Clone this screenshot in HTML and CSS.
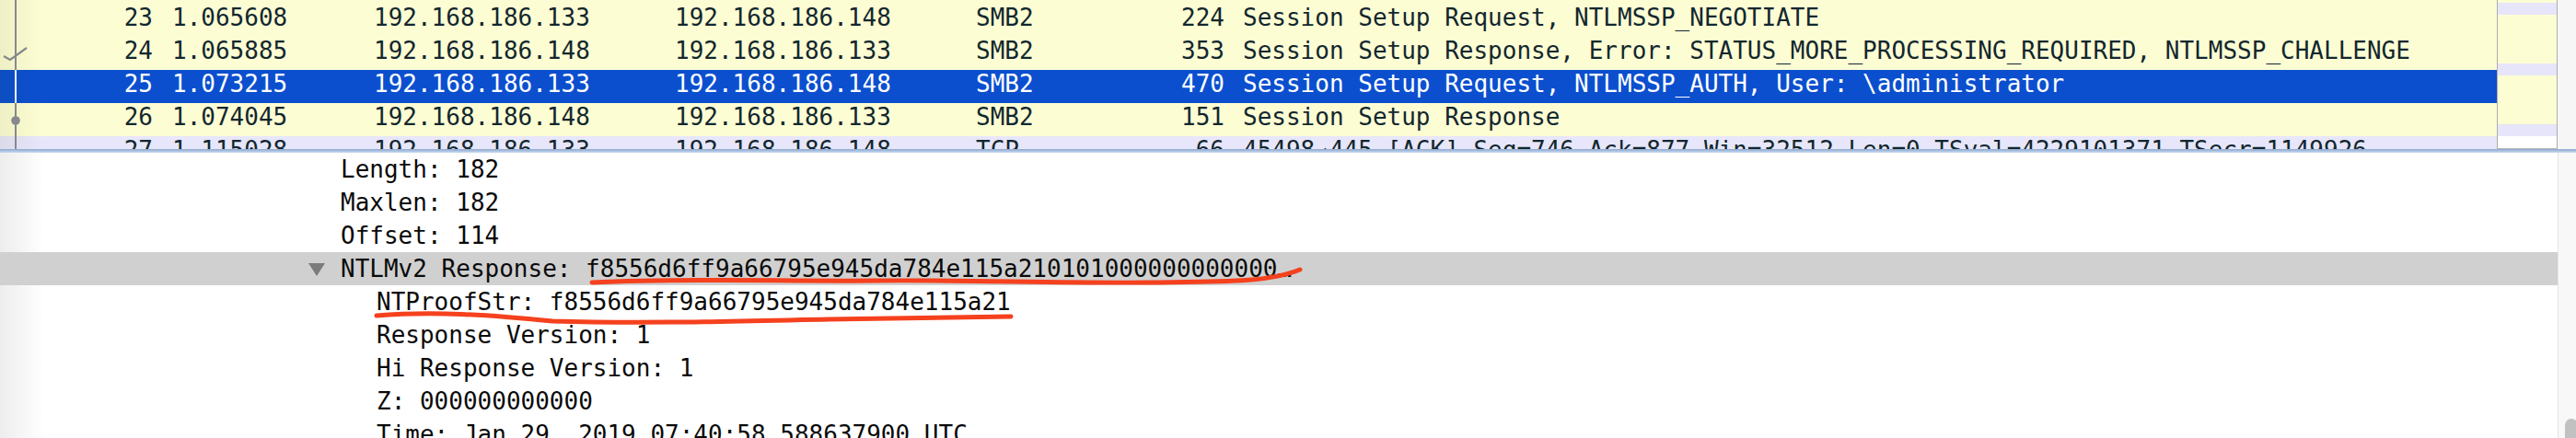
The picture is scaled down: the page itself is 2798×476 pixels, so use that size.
FILE: index.html
```html
<!DOCTYPE html>
<html>
<head>
<meta charset="utf-8">
<link rel="stylesheet" href="styles.css">
</head>
<body>
<div class="app">
  <div class="top">
    <div class="plist">
      <div class="prow-partial smb"><span class="gut"></span></div>
      <div class="prow smb">
        <span class="gut"></span>
        <span class="c-no">23</span><span class="c-time">1.065608</span><span class="c-src">192.168.186.133</span><span class="c-dst">192.168.186.148</span><span class="c-proto">SMB2</span><span class="c-len">224</span><span class="c-info">Session Setup Request, NTLMSSP_NEGOTIATE</span>
      </div>
      <div class="prow smb">
        <span class="gut"><svg class="mark" width="36" height="36" viewBox="0 0 36 36"><polyline points="4,21 11,25 29,12" fill="none" stroke="#8a8d92" stroke-width="2.2"/></svg></span>
        <span class="c-no">24</span><span class="c-time">1.065885</span><span class="c-src">192.168.186.148</span><span class="c-dst">192.168.186.133</span><span class="c-proto">SMB2</span><span class="c-len">353</span><span class="c-info">Session Setup Response, Error: STATUS_MORE_PROCESSING_REQUIRED, NTLMSSP_CHALLENGE</span>
      </div>
      <div class="prow sel">
        <span class="gut"></span>
        <span class="c-no">25</span><span class="c-time">1.073215</span><span class="c-src">192.168.186.133</span><span class="c-dst">192.168.186.148</span><span class="c-proto">SMB2</span><span class="c-len">470</span><span class="c-info">Session Setup Request, NTLMSSP_AUTH, User: \administrator</span>
      </div>
      <div class="prow smb">
        <span class="gut"><svg class="mark" width="36" height="36" viewBox="0 0 36 36"><circle cx="17" cy="19" r="4.8" fill="#8a8d92"/></svg></span>
        <span class="c-no">26</span><span class="c-time">1.074045</span><span class="c-src">192.168.186.148</span><span class="c-dst">192.168.186.133</span><span class="c-proto">SMB2</span><span class="c-len">151</span><span class="c-info">Session Setup Response</span>
      </div>
      <div class="prow tcp">
        <span class="gut"></span>
        <span class="c-no">27</span><span class="c-time">1.115028</span><span class="c-src">192.168.186.133</span><span class="c-dst">192.168.186.148</span><span class="c-proto">TCP</span><span class="c-len">66</span><span class="c-info">45498→445 [ACK] Seq=746 Ack=877 Win=32512 Len=0 TSval=4229101371 TSecr=1149926</span>
      </div>
    </div>
    <div class="minimap">
      <div class="mm mm-top"></div>
      <div class="mm mm-tcp"></div>
      <div class="mm mm-smb"></div>
      <div class="mm mm-tcp"></div>
      <div class="mm mm-smb"></div>
      <div class="mm mm-tcp"></div>
      <div class="mm mm-end"></div>
    </div>
    <div class="vtrack"></div>
  </div>
  <div class="sep"></div>
  <div class="bottom">
    <div class="tree">
      <div class="drow">Length: 182</div>
      <div class="drow">Maxlen: 182</div>
      <div class="drow">Offset: 114</div>
      <div class="drow open"><svg class="twisty" width="18" height="14" viewBox="0 0 18 14"><polygon points="0,0 18,0 9,14" fill="#7b7b7b"/></svg>NTLMv2 Response: f8556d6ff9a66795e945da784e115a210101000000000000…</div>
      <div class="drow child">NTProofStr: f8556d6ff9a66795e945da784e115a21</div>
      <div class="drow child">Response Version: 1</div>
      <div class="drow child">Hi Response Version: 1</div>
      <div class="drow child">Z: 000000000000</div>
      <div class="drow child">Time: Jan 29, 2019 07:40:58.588637900 UTC</div>
      <svg class="ink" width="2778" height="310" viewBox="0 0 2778 310">
        <path d="M643,141 C 750,136 850,140 950,139 C 1050,138 1150,142 1250,141 C 1330,140 1378,141 1412,127" fill="none" stroke="#f5411e" stroke-width="5" stroke-linecap="round"/>
        <path d="M409,177 C 470,172 530,176 600,183 C 700,186 800,183 900,181 C 1000,180 1060,178 1098,178" fill="none" stroke="#f5411e" stroke-width="5" stroke-linecap="round"/>
      </svg>
    </div>
    <div class="dtrack"><div class="thumb"></div></div>
  </div>
</div>
</body>
</html>
```

FILE: styles.css
```css
html, body {
  margin: 0;
  padding: 0;
  background: #ffffff;
}
.app {
  width: 2798px;
  height: 476px;
  overflow: hidden;
  display: flex;
  flex-direction: column;
  font-family: "DejaVu Sans Mono", monospace;
  font-size: 26px;
}
.top {
  height: 162px;
  display: flex;
  flex-shrink: 0;
}
.plist {
  width: 2712px;
  height: 162px;
  overflow: hidden;
  position: relative;
  flex-shrink: 0;
}
.plist::after {
  content: "";
  position: absolute;
  left: 0;
  top: 0;
  bottom: 0;
  width: 46px;
  background: linear-gradient(to right, rgba(60, 60, 0, 0.07), rgba(60, 60, 0, 0));
  pointer-events: none;
}
.prow-partial {
  height: 4px;
  display: flex;
}
.prow-partial .gut {
  height: 4px;
}
.prow {
  height: 36px;
  line-height: 30px;
  display: grid;
  grid-template-columns: 36px 130px 240px 327px 327px 150px 120px 1fr;
  white-space: nowrap;
  color: #12272e;
}
.smb { background: #fdfdd4; }
.tcp { background: #e7e6fa; }
.sel { background: #0b4fcf; color: #ffffff; }
.gut {
  position: relative;
  width: 36px;
  height: 36px;
  display: block;
  background: linear-gradient(to right, transparent 16px, #8a8d92 16px, #8a8d92 18px, transparent 18px);
}
.sel .gut {
  background: linear-gradient(to right, transparent 16px, #ffffff 16px, #ffffff 18px, transparent 18px);
}
.mark {
  position: absolute;
  left: 0;
  top: 0;
}
.c-no { text-align: right; }
.c-time { padding-left: 21px; }
.c-len { text-align: right; }
.c-info { padding-left: 20px; }

.minimap {
  width: 64px;
  height: 161px;
  border-left: 1px solid #adadad;
  border-right: 1px solid #adadad;
  border-bottom: 1px solid #b5b5b5;
  display: flex;
  flex-direction: column;
  flex-shrink: 0;
}
.mm-top { height: 3px; background: #fdfdd4; }
.mm-tcp { height: 13px; background: #e6e5fa; }
.mm-smb { height: 53px; background: #fdfdd4; }
.mm-end { flex: 1; background: #ffffff; }
.vtrack {
  flex: 1;
  background: #f6f6f6;
}
.sep {
  height: 4px;
  flex-shrink: 0;
  background: linear-gradient(to bottom, #8eaad0, #a8c0e0 50%, #cddcf0);
}
.bottom {
  flex: 1;
  display: flex;
  min-height: 0;
}
.tree {
  width: 2778px;
  flex-shrink: 0;
  position: relative;
  overflow: hidden;
  color: #0a0a0a;
  background: linear-gradient(to right, #ededed, #ffffff 48px);
}
.drow {
  height: 36px;
  line-height: 36px;
  padding-left: 370px;
  white-space: nowrap;
  display: flex;
  align-items: center;
}
.drow.child { padding-left: 409px; }
.drow.open {
  background: #d0d0d0;
  padding-left: 335px;
}
.twisty {
  margin-right: 17px;
  margin-top: 1px;
}
.ink {
  position: absolute;
  left: 0;
  top: 0;
  pointer-events: none;
}
.dtrack {
  flex: 1;
  border-left: 1px solid #e4e4e4;
  background: #f8f8f8;
  display: flex;
  flex-direction: column;
}
.thumb {
  margin-top: auto;
  margin-left: 7px;
  width: 14px;
  height: 21px;
  background: #c1c1c1;
  border-radius: 7px 7px 0 0;
}
```
